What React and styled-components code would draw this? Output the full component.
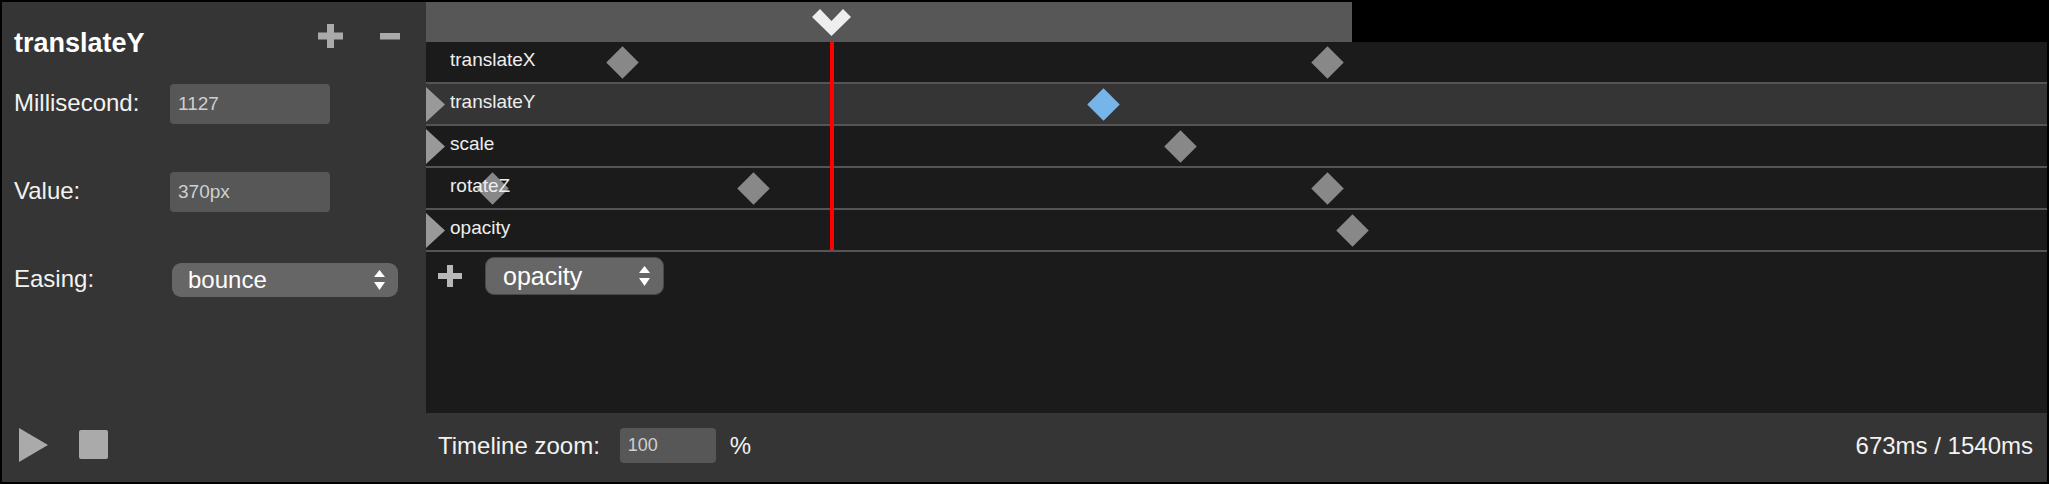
import React from "react"
import styled, { createGlobalStyle } from "styled-components"

const GlobalStyle = createGlobalStyle`
  html, body {
    margin: 0;
    padding: 0;
    background: #000;
  }
  body {
    font-family: "Liberation Sans", Arial, Helvetica, sans-serif;
    color: #fff;
  }
  * {
    box-sizing: border-box;
  }
`

const TOTAL_MS = 1540
const TRACK_PX = 926
const CURRENT_MS = 673
const toPx = ms => (ms / TOTAL_MS) * TRACK_PX

const tracks = [
  { name: "translateX", keys: [326, 1500] },
  { name: "translateY", expandable: true, selected: true, keys: [1127], active: 1127 },
  { name: "scale", expandable: true, keys: [1254] },
  { name: "rotateZ", keys: [110, 545, 1500] },
  { name: "opacity", expandable: true, keys: [1540] },
]

const Window = styled.div`
  width: 2049px;
  height: 484px;
  padding: 2px;
  background: #000;
  display: grid;
  grid-template-columns: 424px 1621px;
  grid-template-rows: 411px 69px;
`

/* ---------- inspector (left) ---------- */

const Inspector = styled.aside`
  grid-row: 1 / 3;
  background: #353535;
  display: flex;
  flex-direction: column;
  padding: 0 26px 0 12px;
`

const InspectorHeader = styled.div`
  display: flex;
  align-items: flex-start;
  padding-top: 22px;
`

const Title = styled.h1`
  margin: 4px 0 0;
  font-size: 27px;
  line-height: 30px;
  font-weight: bold;
  color: #fff;
`

const HeaderActions = styled.div`
  margin-left: auto;
  display: flex;
  gap: 37px;
`

const Glyph = styled.svg`
  display: block;
  fill: ${p => p.$color || "#aaa"};
`

const Fields = styled.div`
  margin-top: 26px;
  display: grid;
  grid-template-columns: 156px 1fr;
  grid-auto-rows: 40px;
  row-gap: 48px;
  align-items: center;
`

const FieldLabel = styled.label`
  font-size: 24px;
  color: #f2f2f2;
  margin-top: -3px;
`

const TextInput = styled.div`
  width: ${p => p.$w}px;
  height: ${p => p.$h}px;
  background: #575757;
  border-radius: 4px;
  display: flex;
  align-items: center;
  padding-left: 8px;
  font-size: ${p => p.$size || 19}px;
  color: #cfcfcf;
`

const SelectBox = styled.div`
  width: ${p => p.$w}px;
  height: ${p => p.$h}px;
  margin-left: ${p => p.$offset || 0}px;
  background: #666;
  border: ${p => (p.$outlined ? "1px solid #484848" : "none")};
  border-radius: 9px;
  display: flex;
  align-items: center;
  padding: 0 13px 0 ${p => p.$pad}px;
  font-size: ${p => p.$size}px;
  color: #fff;
`

const SelectText = styled.span`
  flex: 1;
`

const Transport = styled.div`
  margin-top: auto;
  height: 69px;
  display: flex;
  align-items: center;
  gap: 31px;
  padding: 0 0 6px 5px;
`

const PlayButton = styled.div`
  width: 0;
  height: 0;
  border-top: 17.5px solid transparent;
  border-bottom: 17.5px solid transparent;
  border-left: 29px solid #aaa;
`

const StopButton = styled.div`
  width: 29px;
  height: 29px;
  border-radius: 2px;
  background: #aaa;
`

/* ---------- timeline (right) ---------- */

const Timeline = styled.section`
  background: #1b1b1b;
  display: flex;
  flex-direction: column;
  overflow: hidden;
`

const Ruler = styled.div`
  height: 40px;
  flex-shrink: 0;
  background: #000;
  position: relative;
`

const RulerFill = styled.div`
  height: 100%;
  background: #575757;
`

const PlayheadHandle = styled.svg`
  position: absolute;
  top: 7px;
  fill: #eee;
`

const Tracks = styled.div`
  position: relative;
`

const Track = styled.div`
  height: 42px;
  border-bottom: 2px solid #555;
  background: ${p => (p.$selected ? "#353535" : "#1b1b1b")};
  display: flex;
  align-items: center;
  position: relative;
`

const Expander = styled.div`
  width: 24px;
  align-self: stretch;
  display: flex;
  align-items: center;
  padding-top: 1px;
`

const TrackName = styled.span`
  position: relative;
  z-index: 1;
  font-size: 19px;
  color: #eee;
  margin-top: -4px;
`

const Keyframe = styled.div`
  position: absolute;
  top: 8.5px;
  width: 23px;
  height: 23px;
  transform: rotate(45deg);
  background: ${p => (p.$active ? "#76b5ea" : "#888")};
`

const PlayheadLine = styled.div`
  position: absolute;
  top: 0;
  bottom: 2px;
  width: 4px;
  background: #f00;
  z-index: 2;
`

const AddTrack = styled.div`
  display: flex;
  align-items: center;
  gap: 23px;
  padding: 5px 0 0 12px;
`

/* ---------- footer ---------- */

const Footer = styled.footer`
  grid-column: 2;
  background: #353535;
  display: flex;
  align-items: center;
  padding: 0 14px 4px 12px;
  font-size: 24px;
  color: #f2f2f2;
`

const ZoomLabel = styled.span`
  margin-right: 20px;
`

const Unit = styled.span`
  margin-left: 14px;
`

const Clock = styled.span`
  margin-left: auto;
`

const PlusIcon = ({ w = 25, h = 24, t = 7, color }) => (
  <Glyph width={w} height={h} $color={color}>
    <rect x="0" y={(h - t) / 2} width={w} height={t} />
    <rect x={(w - t) / 2} y="0" width={t} height={h} />
  </Glyph>
)

const MinusIcon = () => (
  <Glyph width={20} height={24}>
    <rect x="0" y="9" width="20" height="6.5" />
  </Glyph>
)

const Updown = () => (
  <Glyph width={11} height={20} $color="#fff">
    <polygon points="0,7 5.5,0 11,7" />
    <polygon points="0,12 5.5,20 11,12" />
  </Glyph>
)

const ExpandArrow = () => (
  <Glyph width={19} height={35} $color="#999">
    <polygon points="0,0 19,17.5 0,35" />
  </Glyph>
)

const Select = ({ children, ...rest }) => (
  <SelectBox {...rest}>
    <SelectText>{children}</SelectText>
    <Updown />
  </SelectBox>
)

export default function App() {
  const head = toPx(CURRENT_MS)
  return (
    <>
      <GlobalStyle />
      <Window>
        <Inspector>
          <InspectorHeader>
            <Title>translateY</Title>
            <HeaderActions>
              <PlusIcon />
              <MinusIcon />
            </HeaderActions>
          </InspectorHeader>
          <Fields>
            <FieldLabel>Millisecond:</FieldLabel>
            <TextInput $w={160} $h={40}>1127</TextInput>
            <FieldLabel>Value:</FieldLabel>
            <TextInput $w={160} $h={40}>370px</TextInput>
            <FieldLabel>Easing:</FieldLabel>
            <Select $w={226} $h={34} $offset={2} $pad={16} $size={24}>
              bounce
            </Select>
          </Fields>
          <Transport>
            <PlayButton />
            <StopButton />
          </Transport>
        </Inspector>

        <Timeline>
          <Ruler>
            <RulerFill style={{ width: TRACK_PX }} />
            <PlayheadHandle
              width="39"
              height="27"
              style={{ left: head - 18.5 }}
            >
              <polygon points="0,8 8,0 19.5,12 31,0 39,8 19.5,27" />
            </PlayheadHandle>
          </Ruler>
          <Tracks>
            {tracks.map(t => (
              <Track key={t.name} $selected={t.selected}>
                <Expander>{t.expandable && <ExpandArrow />}</Expander>
                <TrackName>{t.name}</TrackName>
                {t.keys.map(ms => (
                  <Keyframe
                    key={ms}
                    $active={t.active === ms}
                    style={{ left: toPx(ms) - 11.5 }}
                  />
                ))}
              </Track>
            ))}
            <PlayheadLine style={{ left: head - 1 }} />
          </Tracks>
          <AddTrack>
            <PlusIcon w={24} h={22} t={6} color="#b8b8b8" />
            <Select $w={179} $h={38} $pad={17} $size={25} $outlined>
              opacity
            </Select>
          </AddTrack>
        </Timeline>

        <Footer>
          <ZoomLabel>Timeline zoom:</ZoomLabel>
          <TextInput $w={96} $h={35} $size={18}>100</TextInput>
          <Unit>%</Unit>
          <Clock>673ms / 1540ms</Clock>
        </Footer>
      </Window>
    </>
  )
}
